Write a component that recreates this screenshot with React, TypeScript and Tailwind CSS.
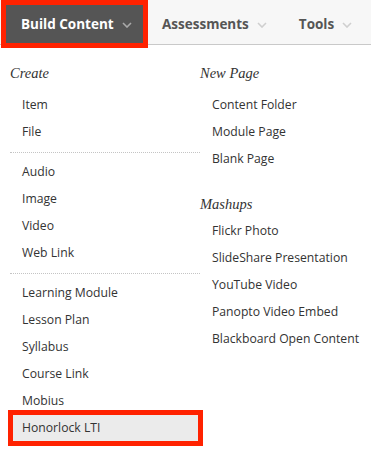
import React from "react";

const sans = { fontFamily: '"Open Sans", "Liberation Sans", sans-serif' };
const serif = { fontFamily: '"Liberation Serif", "DejaVu Serif", serif' };

const Chevron = ({ color }: { color: string }) => (
  <svg width="10" height="6" viewBox="0 0 10 6" className="ml-[8px] mt-[2px]">
    <polyline points="1,1 5,5 9,1" fill="none" stroke={color} strokeWidth="1.6" />
  </svg>
);

const Heading = ({ children, className = "" }: { children: string; className?: string }) => (
  <div
    style={serif}
    className={`h-[27px] flex items-center text-[14.5px] italic text-[#333] ${className}`}
  >
    {children}
  </div>
);

const Item = ({ label, className = "" }: { label: string; className?: string }) => (
  <div className={`h-[27px] flex items-center text-[12.2px] text-[#333] ${className}`}>{label}</div>
);

const Divider = () => (
  <div className="h-[13px] flex items-center ml-[10px]">
    <div className="w-full border-t border-dotted border-[#c4c4c4]" />
  </div>
);

export default function App() {
  return (
    <div style={sans} className="w-[371px] h-[449px] bg-white overflow-hidden">
      <nav className="h-[45px] bg-[#f7f7f7] border-b border-[#c9c9c9] pt-[5px] flex items-start">
        <div className="ml-[6px] h-[38px] w-[137px] bg-[#555555] outline-[5px] outline-solid outline-[#ff2200] flex items-center pl-[15px]">
          <span className="text-[13.5px] font-bold text-white">Build Content</span>
          <Chevron color="#a9a9a9" />
        </div>
        <div className="h-[38px] flex items-center ml-[19px]">
          <span className="text-[13.5px] font-bold text-[#555]">Assessments</span>
          <Chevron color="#cfcfcf" />
        </div>
        <div className="h-[38px] flex items-center ml-[32px]">
          <span className="text-[13.5px] font-bold text-[#555]">Tools</span>
          <Chevron color="#cfcfcf" />
        </div>
      </nav>
      <div className="flex pt-[15px]">
        <div className="w-[200px] shrink-0">
          <Heading className="pl-[10px] mb-[5px]">Create</Heading>
          <Item label="Item" className="pl-[22px]" />
          <Item label="File" className="pl-[22px]" />
          <Divider />
          <Item label="Audio" className="pl-[22px]" />
          <Item label="Image" className="pl-[22px]" />
          <Item label="Video" className="pl-[22px]" />
          <Item label="Web Link" className="pl-[22px]" />
          <Divider />
          <Item label="Learning Module" className="pl-[22px]" />
          <Item label="Lesson Plan" className="pl-[22px]" />
          <Item label="Syllabus" className="pl-[22px]" />
          <Item label="Course Link" className="pl-[22px]" />
          <Item label="Mobius" className="pl-[22px]" />
          <div className="ml-[13px] w-[185px] h-[26px] bg-[#ebebeb] outline-[5px] outline-solid outline-[#ff2200] flex items-center pl-[9px] text-[12.2px] text-[#333]">
            Honorlock LTI
          </div>
        </div>
        <div className="flex-1">
          <Heading className="mb-[5px]">New Page</Heading>
          <Item label="Content Folder" className="pl-[12px]" />
          <Item label="Module Page" className="pl-[12px]" />
          <Item label="Blank Page" className="pl-[12px]" />
          <Heading className="mt-[18px]">Mashups</Heading>
          <Item label="Flickr Photo" className="pl-[12px]" />
          <Item label="SlideShare Presentation" className="pl-[12px]" />
          <Item label="YouTube Video" className="pl-[12px]" />
          <Item label="Panopto Video Embed" className="pl-[12px]" />
          <Item label="Blackboard Open Content" className="pl-[12px]" />
        </div>
      </div>
    </div>
  );
}
